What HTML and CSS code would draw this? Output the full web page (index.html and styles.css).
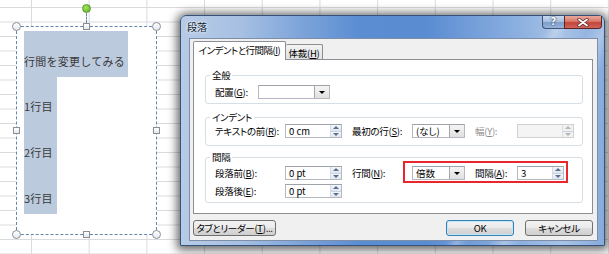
FILE: index.html
```html
<!DOCTYPE html>
<html lang="ja">
<head>
<meta charset="utf-8">
<title>段落</title>
<link rel="stylesheet" href="styles.css">
</head>
<body>
<div class="sheet">
  <div class="textbox">
    <div class="rot-line"></div>
    <div class="rot"></div>
    <div class="h c tl"></div><div class="h c tr"></div><div class="h c bl"></div><div class="h c br"></div>
    <div class="h s tm"></div><div class="h s bm"></div><div class="h s ml"></div><div class="h s mr"></div>
    <div class="tline first"><span>行間を変更してみる</span></div>
    <div class="tline"><span>1行目</span></div>
    <div class="tline"><span>2行目</span></div>
    <div class="tline"><span>3行目</span></div>
  </div>

  <div class="dialog">
    <div class="titlebar">
      <span class="title">段落</span>
      <div class="caps">
        <div class="cap help">?</div>
        <div class="cap close">
          <svg width="12" height="9" viewBox="0 0 12 9"><path d="M2 1.5 L10 7.5 M10 1.5 L2 7.5" stroke="#5a2a2a" stroke-width="3.4" stroke-linecap="round"/><path d="M2 1.5 L10 7.5 M10 1.5 L2 7.5" stroke="#ffffff" stroke-width="1.8" stroke-linecap="round"/></svg>
        </div>
      </div>
    </div>
    <div class="client">
      <div class="tabs">
        <div class="tab active">インデントと行間隔(<u>I</u>)</div>
        <div class="tab">体裁(<u>H</u>)</div>
      </div>
      <div class="panel">
        <div class="group g1">
          <div class="legend">全般</div>
          <div class="row">
            <span class="lbl w43">配置(<u>G</u>):</span>
            <div class="combo w72"><span class="val"></span><span class="drop"><i></i></span></div>
          </div>
        </div>
        <div class="group g2">
          <div class="legend">インデント</div>
          <div class="row">
            <span class="lbl w70">テキストの前(<u>R</u>):</span>
            <div class="edit w57"><span class="val">0 cm</span><span class="spin"><b class="up"></b><b class="dn"></b></span></div>
            <span class="lbl w60 ml10">最初の行(<u>S</u>):</span>
            <div class="combo w53"><span class="val">(なし)</span><span class="drop"><i></i></span></div>
            <span class="lbl w42 ml10 dis">幅(<u>Y</u>):</span>
            <div class="edit w57 disabled"><span class="val"></span><span class="spin"><b class="up"></b><b class="dn"></b></span></div>
          </div>
        </div>
        <div class="group g3">
          <div class="legend">間隔</div>
          <div class="row">
            <span class="lbl w70">段落前(<u>B</u>):</span>
            <div class="edit w57"><span class="val">0 pt</span><span class="spin"><b class="up"></b><b class="dn"></b></span></div>
            <span class="lbl w60 ml10">行間(<u>N</u>):</span>
            <div class="combo w53"><span class="val">倍数</span><span class="drop"><i></i></span></div>
            <span class="lbl w42 ml10">間隔(<u>A</u>):</span>
            <div class="edit w47"><span class="val">3</span><span class="spin"><b class="up"></b><b class="dn"></b></span></div>
          </div>
          <div class="row r2">
            <span class="lbl w70">段落後(<u>E</u>):</span>
            <div class="edit w57"><span class="val">0 pt</span><span class="spin"><b class="up"></b><b class="dn"></b></span></div>
          </div>
          <div class="mark"></div>
        </div>
      </div>
      <div class="buttons">
        <div class="btn tabs-btn">タブとリーダー(<u>T</u>)...</div>
        <div class="spacer"></div>
        <div class="btn ok">OK</div>
        <div class="btn cancel">キャンセル</div>
      </div>
    </div>
  </div>
</div>
</body>
</html>
```

FILE: styles.css
```css
html, body {
  margin: 0;
  padding: 0;
}
body {
  width: 609px;
  height: 254px;
  overflow: hidden;
  font-family: "Noto Sans CJK JP", "Noto Sans", sans-serif;
}
.sheet {
  position: relative;
  width: 609px;
  height: 254px;
  background-color: #ffffff;
  background-image:
    linear-gradient(to right, #d8dadc 1px, transparent 1px),
    linear-gradient(to bottom, #d8dadc 1px, transparent 1px);
  background-size: 57.7px 14.5px, 57.7px 14.5px;
  background-position: 31px 0, 0 7px;
}

/* ---------- text box on the sheet ---------- */
.textbox {
  position: absolute;
  left: 16px;
  top: 26px;
  width: 141px;
  height: 209px;
  box-sizing: border-box;
  border: 1px dashed #6585ad;
  background: #ffffff;
  padding: 4px 0 0 7px;
  color: #3a3a3a;
  font-size: 11px;
  letter-spacing: 0.25px;
}
.tline {
  width: 33px;
  height: 45.7px;
  background: #bccade;
  display: flex;
  align-items: flex-end;
  box-sizing: border-box;
  padding-bottom: 9px;
  line-height: 13px;
  white-space: nowrap;
}
.tline.first {
  width: 103.5px;
}
.h {
  position: absolute;
  box-sizing: border-box;
  border: 1px solid #8a8f97;
  background: linear-gradient(#ffffff, #e4e7ec);
}
.h.c { width: 9px; height: 9px; border-radius: 50%; }
.h.s { width: 7px; height: 7px; }
.tl { left: -5px; top: -5px; }
.tr { right: -5px; top: -5px; }
.bl { left: -5px; bottom: -5px; }
.br { right: -5px; bottom: -5px; }
.tm { left: 66px; top: -4px; }
.bm { left: 66px; bottom: -4px; }
.ml { left: -4px; top: 100px; }
.mr { right: -4px; top: 100px; }
.rot {
  position: absolute;
  left: 65px;
  top: -23px;
  width: 9px;
  height: 9px;
  box-sizing: border-box;
  border-radius: 50%;
  border: 1px solid #5a9a2a;
  background: radial-gradient(circle at 40% 35%, #a6e36a, #6cc02e 70%);
}
.rot-line {
  position: absolute;
  left: 69px;
  top: -14px;
  width: 0;
  height: 10px;
  border-left: 1px dashed #6585ad;
}

/* ---------- dialog window ---------- */
.dialog {
  position: absolute;
  left: 180px;
  top: 15px;
  width: 425px;
  height: 231px;
  box-sizing: border-box;
  border: 1px solid #34527c;
  border-radius: 6px 6px 0 0;
  padding: 0 6px 4px 8px;
  display: flex;
  flex-direction: column;
  box-shadow: 0 1px 10px 3px rgba(0, 0, 0, 0.6);
  background:
    linear-gradient(115deg, transparent 0%, transparent 70%, rgba(255,255,255,0.25) 72%, transparent 74%, transparent 78%, rgba(255,255,255,0.3) 81%, transparent 84%),
    linear-gradient(90deg, #b7cbe6 0%, #a7c0e3 14%, #7ea5da 28%, #5b8dd2 42%, #5a8cd2 58%, #76a0da 70%, #8cb0e0 80%, #a9c3e6 90%, #86abdd 100%);
}
.titlebar {
  height: 22px;
  display: flex;
  align-items: flex-start;
  flex-shrink: 0;
}
.title {
  margin: 5px 0 0 -2px;
  font-size: 10px;
  line-height: 12px;
  color: #0c1c30;
  text-shadow: 0 0 4px rgba(255,255,255,0.9), 0 0 2px rgba(255,255,255,0.9);
}
.caps {
  margin-left: auto;
  margin-right: -4px;
  display: flex;
}
.cap {
  height: 13px;
  box-sizing: border-box;
  display: flex;
  align-items: center;
  justify-content: center;
  border: 1px solid #3f5573;
  border-top: none;
}
.help {
  width: 22px;
  border-radius: 0 0 0 4px;
  border-right: none;
  background: linear-gradient(#c9d8ec 0%, #a9c0e0 45%, #7f9ecb 55%, #98b4db 100%);
  color: #ffffff;
  font-family: "DejaVu Sans", sans-serif;
  font-weight: bold;
  font-size: 10px;
  line-height: 10px;
  text-shadow: 0 0 2px #243a5a, 0 0 1px #243a5a;
}
.close {
  width: 38px;
  border-radius: 0 0 4px 0;
  border-color: #5c2424;
  background: linear-gradient(#e9a99b 0%, #d9786a 45%, #c4463b 55%, #d0655a 100%);
}
.client {
  flex: 1;
  background: #f0f0f0;
  border: 1px solid #7e8ea6;
  display: flex;
  flex-direction: column;
  padding: 2px 4px 0 3px;
  font-size: 9.5px;
  letter-spacing: -0.3px;
  color: #000000;
  font-feature-settings: "palt";
}

/* tabs */
.tabs {
  height: 18px;
  display: flex;
  align-items: flex-end;
  flex-shrink: 0;
}
.tab {
  box-sizing: border-box;
  border: 1px solid #8c8e94;
  border-bottom: none;
  border-radius: 2px 2px 0 0;
  display: flex;
  align-items: center;
  justify-content: center;
  white-space: nowrap;
  line-height: 12px;
}
.tab.active {
  width: 93px;
  height: 19px;
  margin-bottom: -1px;
  background: #ffffff;
  position: relative;
  z-index: 1;
  padding-bottom: 2px;
  letter-spacing: -0.5px;
}
.tab:not(.active) {
  width: 37px;
  height: 15px;
  border-left: none;
  background: linear-gradient(#f3f3f3, #e2e2e2);
  padding-top: 1px;
}
.panel {
  height: 155px;
  box-sizing: border-box;
  background: #ffffff;
  border: 1px solid #8c8e94;
  padding: 0 9px 0 11px;
  flex-shrink: 0;
}
.group {
  position: relative;
  box-sizing: border-box;
  border: 1px solid #d5dfe5;
  border-radius: 3px;
  padding-left: 9px;
}
.g1 { margin-top: 15px; height: 29px; }
.g2 { margin-top: 13px; height: 29px; }
.g3 { margin-top: 11px; height: 46px; }
.legend {
  width: max-content;
  margin: -8px 0 0 -5px;
  padding: 0 2px;
  background: #ffffff;
  line-height: 14px;
  height: 14px;
}
.row {
  height: 14px;
  display: flex;
  align-items: center;
  white-space: nowrap;
}
.g1 .row { margin-top: 3px; }
.g2 .row { margin-top: 0; }
.g3 .row { margin-top: 2px; }
.g3 .row.r2 { margin-top: 4px; }
.lbl {
  line-height: 12px;
  flex-shrink: 0;
}
.dis { color: #8d8d8d; }
.w42 { width: 42px; }
.w43 { width: 43px; }
.w47 { width: 47px; }
.w53 { width: 53px; }
.w57 { width: 57px; }
.w60 { width: 60px; }
.w70 { width: 70px; }
.w72 { width: 72px; }
.ml10 { margin-left: 10px; }

.edit, .combo {
  height: 14px;
  box-sizing: border-box;
  background: #ffffff;
  border: 1px solid #b5b8be;
  border-top-color: #9ea2a9;
  display: flex;
  align-items: stretch;
  flex-shrink: 0;
}
.val {
  flex: 1;
  padding-left: 3px;
  line-height: 12px;
  font-size: 9.5px;
  letter-spacing: 0;
}
.spin {
  width: 11px;
  display: flex;
  flex-direction: column;
}
.spin b {
  flex: 1;
  display: flex;
  align-items: center;
  justify-content: center;
  background: linear-gradient(#f4f7fb, #dfe6ef);
  border-left: 1px solid #d5dce6;
}
.spin b::after {
  content: "";
  width: 0;
  height: 0;
  border-left: 3px solid transparent;
  border-right: 3px solid transparent;
}
.spin .up::after { border-bottom: 3px solid #5a6e92; }
.spin .dn::after { border-top: 3px solid #5a6e92; }
.spin .up { border-bottom: 1px solid #c9d1dc; }
.disabled {
  background: #f4f4f4;
  border-color: #cfd1d4;
}
.disabled .spin b { background: #f1f1f1; border-left-color: #dedede; }
.disabled .spin .up::after { border-bottom-color: #b5b5b5; }
.disabled .spin .dn::after { border-top-color: #b5b5b5; }
.drop {
  width: 14px;
  display: flex;
  align-items: center;
  justify-content: center;
  border-left: 1px solid #a5a7ab;
  background: linear-gradient(#f5f5f5, #e0e0e0);
}
.drop i {
  width: 0;
  height: 0;
  border-left: 3px solid transparent;
  border-right: 3px solid transparent;
  border-top: 3px solid #000000;
}
.mark {
  position: absolute;
  left: 197px;
  top: 3px;
  width: 165px;
  height: 22px;
  box-sizing: border-box;
  border: 2px solid #e8262b;
}

/* buttons */
.buttons {
  margin-top: 6px;
  height: 16px;
  display: flex;
}
.spacer { flex: 1; }
.btn {
  box-sizing: border-box;
  height: 16px;
  border: 1px solid #707070;
  border-radius: 3px;
  background: linear-gradient(#f2f2f2 0%, #ebebeb 50%, #dddddd 51%, #cfcfcf 100%);
  display: flex;
  align-items: center;
  justify-content: center;
  line-height: 12px;
  white-space: nowrap;
}
.tabs-btn { width: 83px; }
.ok {
  width: 68px;
  border-color: #3c7fb1;
  box-shadow: inset 0 0 0 1px #bde6fb;
}
.cancel { width: 68px; margin-left: 11px; }
```
